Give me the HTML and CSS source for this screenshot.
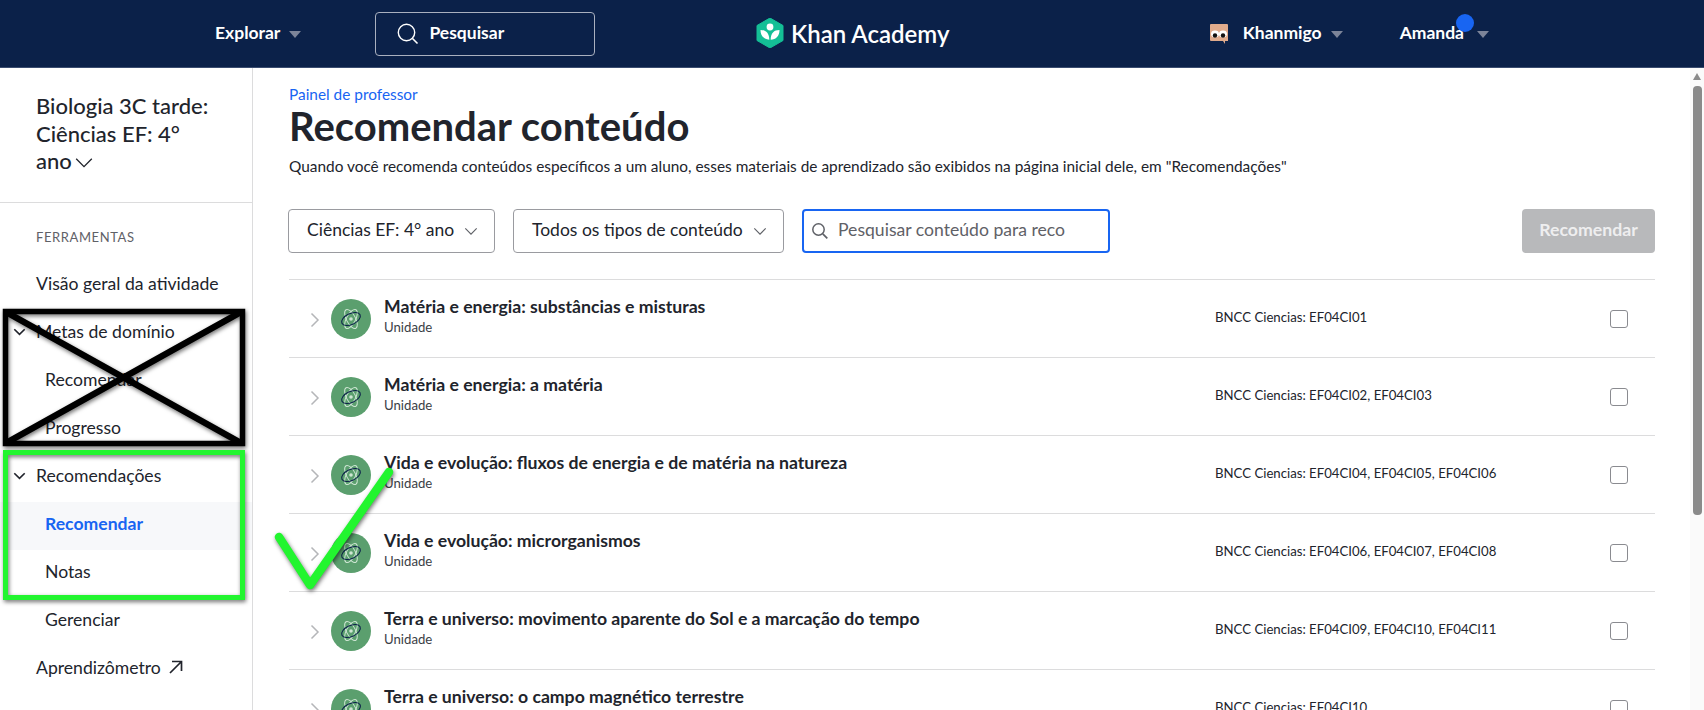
FILE: index.html
```html
<!DOCTYPE html>
<html lang="pt-BR">
<head>
<meta charset="utf-8">
<title>Recomendar conteúdo</title>
<link rel="stylesheet" href="styles.css">
</head>
<body>
<svg width="0" height="0" class="defs">
  <defs>
    <symbol id="atom" viewBox="0 0 40 40">
      <circle cx="20" cy="20" r="20" fill="#5b9f6e"/>
      <g fill="none" stroke-width="1">
        <ellipse cx="20" cy="20" rx="4.500" ry="10.500" stroke="#cfe6d4" transform="rotate(-28 20 20)"/>
        <ellipse cx="20" cy="20" rx="4.500" ry="10.500" stroke="#cfe6d4" transform="rotate(28 20 20)"/>
        <ellipse cx="20" cy="20" rx="10" ry="5.500" stroke="#0b2149" stroke-width="1.100" transform="rotate(-25 20 20)"/>
      </g>
      <circle cx="20" cy="20" r="1.800" fill="#cfe6d4"/>
    </symbol>
    <symbol id="chev-right" viewBox="0 0 10 16">
      <path d="M1.5 1.5 8 8l-6.500 6.500" fill="none" stroke="#b5b6b9" stroke-width="1.500"/>
    </symbol>
    <symbol id="chev-down" viewBox="0 0 16 10">
      <path d="M1.500 1.500 8 8l6.500-6.500" fill="none" stroke="currentColor"/>
    </symbol>
  </defs>
</svg>

<header class="topbar">
  <div class="top-left">
    <span class="top-link">Explorar<i class="caret"></i></span>
    <div class="top-search">
      <svg class="top-search-icon" viewBox="0 0 24 24" width="24" height="24"><circle cx="10.500" cy="10.500" r="8.200" fill="none" stroke="#fff" stroke-width="1.400"/><path d="m16.500 16.500 5 5" stroke="#fff" stroke-width="1.600"/></svg>
      <span>Pesquisar</span>
    </div>
  </div>
  <div class="logo">
    <svg width="28" height="30" viewBox="0 0 28 30">
      <path d="M14 0 27 7.500v15L14 30 1 22.500v-15z" fill="#14bf96" stroke="#14bf96" stroke-linejoin="round"/>
      <circle cx="14" cy="9" r="3.400" fill="#fff"/>
      <path d="M4.500 12c5.500 0 8.800 3.200 8.800 9.800C8 21.500 4.500 18 4.500 12zM23.500 12c-5.500 0-8.800 3.200-8.800 9.800 5.300-.3 8.800-3.800 8.800-9.800z" fill="#fff"/>
    </svg>
    <span>Khan Academy</span>
  </div>
  <div class="top-right">
    <span class="top-link khanmigo">
      <svg width="20" height="21" viewBox="0 0 20 21"><path d="M2 1h16a1 1 0 0 1 1 1v16h-3v3l-2-3H2a1 1 0 0 1-1-1V2a1 1 0 0 1 1-1z" fill="#e0ab8c"/><ellipse cx="6" cy="11" rx="4" ry="3.400" fill="#fff"/><ellipse cx="14" cy="11" rx="4" ry="3.400" fill="#fff"/><circle cx="6" cy="12.500" r="2.200" fill="#111"/><circle cx="14" cy="12.500" r="2.200" fill="#111"/></svg>
      Khanmigo<i class="caret"></i>
    </span>
    <span class="top-link amanda">Amanda<b class="dot"></b><i class="caret"></i></span>
  </div>
</header>

<div class="layout">
  <aside class="sidebar">
    <div class="class-title">Biologia 3C tarde: Ciências EF: 4° ano<svg class="title-chev" width="20" height="12"><use href="#chev-down"/></svg></div>
    <nav class="nav">
      <div class="nav-head">FERRAMENTAS</div>
      <div class="nav-row">Visão geral da atividade</div>
      <div class="nav-row"><svg class="nav-chev" width="13" height="8"><use href="#chev-down"/></svg>Metas de domínio</div>
      <div class="nav-row child">Recomendar</div>
      <div class="nav-row child">Progresso</div>
      <div class="nav-row"><svg class="nav-chev" width="13" height="8"><use href="#chev-down"/></svg>Recomendações</div>
      <div class="nav-row child active">Recomendar</div>
      <div class="nav-row child">Notas</div>
      <div class="nav-row child">Gerenciar</div>
      <div class="nav-row">Aprendizômetro<svg class="ext" width="14" height="14" viewBox="0 0 14 14"><path d="M1 13 12.500 1.500M3 1.500h9.500V11" fill="none" stroke="#21242c" stroke-width="1.700"/></svg></div>
    </nav>
  </aside>

  <main class="main">
    <div class="crumb">Painel de professor</div>
    <h1 class="title">Recomendar conteúdo</h1>
    <p class="desc">Quando você recomenda conteúdos específicos a um aluno, esses materiais de aprendizado são exibidos na página inicial dele, em "Recomendações"</p>

    <div class="filters">
      <div class="select sel-1"><span>Ciências EF: 4° ano</span><svg width="14" height="9"><use href="#chev-down"/></svg></div>
      <div class="select sel-2"><span>Todos os tipos de conteúdo</span><svg width="14" height="9"><use href="#chev-down"/></svg></div>
      <div class="search">
        <svg width="18" height="18" viewBox="0 0 18 18"><circle cx="7.500" cy="7.500" r="5.700" fill="none" stroke="#5f6167" stroke-width="1.500"/><path d="m11.800 11.800 4.500 4.500" stroke="#5f6167" stroke-width="1.700"/></svg>
        <span>Pesquisar conteúdo para reco</span>
      </div>
      <div class="rec-btn">Recomendar</div>
    </div>

    <div class="list">
      <div class="row">
        <svg class="row-chev" width="10" height="16"><use href="#chev-right"/></svg>
        <svg class="row-icon" width="40" height="40"><use href="#atom"/></svg>
        <div class="row-text"><div class="row-title">Matéria e energia: substâncias e misturas</div><div class="row-sub">Unidade</div></div>
        <div class="row-code">BNCC Ciencias: EF04CI01</div>
        <i class="check"></i>
      </div>
      <div class="row">
        <svg class="row-chev" width="10" height="16"><use href="#chev-right"/></svg>
        <svg class="row-icon" width="40" height="40"><use href="#atom"/></svg>
        <div class="row-text"><div class="row-title">Matéria e energia: a matéria</div><div class="row-sub">Unidade</div></div>
        <div class="row-code">BNCC Ciencias: EF04CI02, EF04CI03</div>
        <i class="check"></i>
      </div>
      <div class="row">
        <svg class="row-chev" width="10" height="16"><use href="#chev-right"/></svg>
        <svg class="row-icon" width="40" height="40"><use href="#atom"/></svg>
        <div class="row-text"><div class="row-title">Vida e evolução: fluxos de energia e de matéria na natureza</div><div class="row-sub">Unidade</div></div>
        <div class="row-code">BNCC Ciencias: EF04CI04, EF04CI05, EF04CI06</div>
        <i class="check"></i>
      </div>
      <div class="row">
        <svg class="row-chev" width="10" height="16"><use href="#chev-right"/></svg>
        <svg class="row-icon" width="40" height="40"><use href="#atom"/></svg>
        <div class="row-text"><div class="row-title">Vida e evolução: microrganismos</div><div class="row-sub">Unidade</div></div>
        <div class="row-code">BNCC Ciencias: EF04CI06, EF04CI07, EF04CI08</div>
        <i class="check"></i>
      </div>
      <div class="row">
        <svg class="row-chev" width="10" height="16"><use href="#chev-right"/></svg>
        <svg class="row-icon" width="40" height="40"><use href="#atom"/></svg>
        <div class="row-text"><div class="row-title">Terra e universo: movimento aparente do Sol e a marcação do tempo</div><div class="row-sub">Unidade</div></div>
        <div class="row-code">BNCC Ciencias: EF04CI09, EF04CI10, EF04CI11</div>
        <i class="check"></i>
      </div>
      <div class="row">
        <svg class="row-chev" width="10" height="16"><use href="#chev-right"/></svg>
        <svg class="row-icon" width="40" height="40"><use href="#atom"/></svg>
        <div class="row-text"><div class="row-title">Terra e universo: o campo magnético terrestre</div><div class="row-sub">Unidade</div></div>
        <div class="row-code">BNCC Ciencias: EF04CI10</div>
        <i class="check"></i>
      </div>
    </div>
  </main>

  <div class="scrollbar"><i class="sb-arrow"></i><i class="sb-thumb"></i></div>
</div>

<svg class="marks" width="1704" height="710" viewBox="0 0 1704 710">
  <g class="mark-shadow">
    <g fill="none" stroke="#000" stroke-width="5.500">
      <rect x="5.500" y="311.500" width="237" height="132"/>
      <path d="M6 312 241 443M241 312 6 443" stroke-width="6.500"/>
    </g>
    <rect x="5.500" y="452.500" width="237" height="145" fill="none" stroke="#22f52f" stroke-width="5"/>
    <path d="M279 537 310 585 389 472" fill="none" stroke="#22f52f" stroke-width="8.500" stroke-linecap="round" stroke-linejoin="round"/>
  </g>
</svg>
</body>
</html>
```

FILE: styles.css
```css
* { box-sizing: border-box; }
html, body { margin: 0; height: 710px; overflow: hidden; }
body { font-family: Lato, "Liberation Sans", sans-serif; color: #21242c; background: #fff; position: relative; }
.defs { position: absolute; }

.topbar { height: 68px; background: #0b2149; border-bottom: 1px solid #3b4d70; display: flex; align-items: center; position: relative; }
.top-left { display: flex; align-items: center; padding-left: 215px; }
.top-link { color: #fff; font-size: 17.500px; font-weight: 700; display: inline-flex; align-items: center; position: relative; margin-top: -2px; }
.caret { display: inline-block; width: 0; height: 0; border-left: 6px solid transparent; border-right: 6px solid transparent; border-top: 7px solid #7c8499; margin-left: 9px; margin-top: 4px; }
.top-search { width: 220px; height: 44px; margin-left: 74px; border: 1px solid #a9b0bf; border-radius: 4px; display: flex; align-items: center; padding: 0 0 2px 20px; color: #fff; font-size: 17.500px; font-weight: 700; }
.top-search-icon { margin-right: 9px; margin-top: 2px; }
.logo { position: absolute; left: 756px; top: 18px; display: flex; align-items: center; gap: 7px; color: #fff; font-size: 24px; font-weight: 600; }
.top-right { margin-left: auto; display: flex; align-items: center; padding-right: 215px; }
.khanmigo svg { margin-right: 14px; margin-top: 2px; }
.amanda { margin-left: 57px; }
.dot { position: absolute; left: 56px; top: -8px; width: 18px; height: 18px; border-radius: 50%; background: #1865f2; }
.amanda .caret { margin-left: 13px; }

.layout { display: flex; height: 642px; position: relative; }
.sidebar { width: 253px; flex: none; border-right: 1px solid #dcdcdd; }
.class-title { height: 135px; padding: 24px 40px 0 36px; border-bottom: 1px solid #dcdcdd; font-size: 22px; font-weight: 500; line-height: 27.500px; }
.title-chev { margin-left: 2px; color: #21242c; stroke-width: 1.100; }
.nav-head { height: 59px; padding-top: 26px; padding-left: 36px; font-size: 13px; letter-spacing: .6px; color: #5f6167; }
.nav-row { height: 48px; padding: 0 0 6px 36px; display: flex; align-items: center; font-size: 17.600px; position: relative; }
.nav-row.child { padding-left: 45px; }
.nav-row.active { background: #f7f8fa; color: #1865f2; font-weight: 700; }
.nav-chev { position: absolute; left: 13px; top: 18px; color: #21242c; stroke-width: 2; }
.ext { margin-left: 8px; }

.main { flex: 1; min-width: 0; padding: 16px 49px 0 36px; }
.crumb { font-size: 15.400px; line-height: 20px; color: #1865f2; }
.title { margin: -1px 0 0; font-size: 40px; line-height: 46px; font-weight: 700; }
.desc { margin: 7px 0 0; font-size: 15.400px; line-height: 20px; }
.filters { display: flex; align-items: center; gap: 18px; margin: 33px 0 0 -1px; height: 44px; }
.select { height: 44px; border: 1px solid #9a9ba0; border-radius: 4px; display: flex; align-items: center; justify-content: space-between; padding: 0 16px 0 18px; font-size: 17.500px; }
.select span { margin-top: -4px; }
.select svg { color: #5f6167; stroke-width: 1.300; }
.sel-1 { width: 207px; }
.sel-2 { width: 271px; }
.search { width: 308px; height: 44px; border: 2px solid #1865f2; border-radius: 4px; display: flex; align-items: center; gap: 9px; padding-left: 7px; font-size: 17.600px; color: #5f6167; }
.search span { margin-top: -3px; }
.rec-btn { margin-left: auto; width: 133px; height: 44px; padding-bottom: 3px; background: #b8b9bb; border-radius: 4px; color: #eeeeef; font-size: 17.700px; font-weight: 700; display: flex; align-items: center; justify-content: center; }
.list { margin-top: 26px; }
.row { height: 78px; border-top: 1px solid #dcdcdd; display: flex; align-items: center; position: relative; }
.row-chev { margin-left: 21px; margin-top: 2px; flex: none; }
.row-icon { margin-left: 11px; flex: none; }
.row-text { margin-left: 13px; width: 831px; flex: none; margin-top: -5px; }
.row-title { font-size: 17.650px; font-weight: 700; line-height: 22px; }
.row-sub { font-size: 13.200px; line-height: 18px; color: #3b3e46; }
.row-code { font-size: 13.200px; width: 395px; flex: none; margin-top: -4px; }
.check { width: 18px; height: 18px; border: 1px solid #8a8b90; border-radius: 3px; flex: none; margin-top: 1px; }

.scrollbar { position: absolute; right: 0; top: 0; bottom: 0; width: 14px; background: #fafafa; }
.sb-arrow { position: absolute; left: 3px; top: 5px; width: 0; height: 0; border-left: 4.500px solid transparent; border-right: 4.500px solid transparent; border-bottom: 7px solid #8a8a8a; }
.sb-thumb { position: absolute; left: 3px; top: 18px; width: 9px; height: 429px; border-radius: 4px; background: #8a8a8a; }

.marks { position: absolute; left: 0; top: 0; pointer-events: none; }
.mark-shadow { filter: drop-shadow(1px 2px 2px rgba(0, 0, 0, .55)); }
```
